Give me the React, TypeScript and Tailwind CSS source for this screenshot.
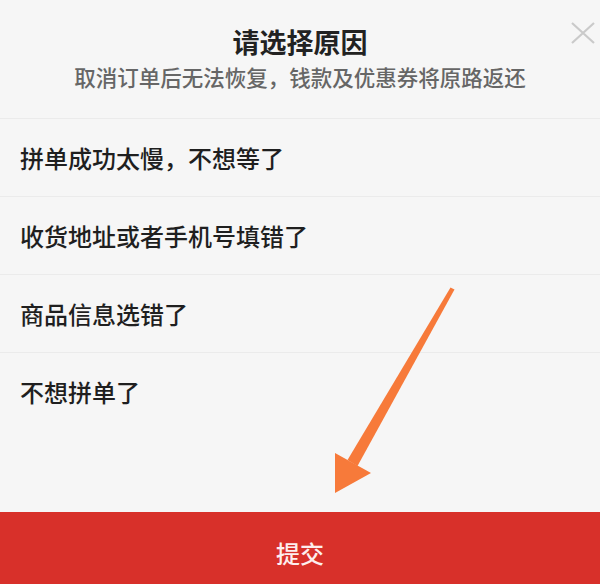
const reasons = [
  "拼单成功太慢，不想等了",
  "收货地址或者手机号填错了",
  "商品信息选错了",
  "不想拼单了",
];

function Arrow() {
  return (
    <svg className="pointer-events-none absolute left-0 top-0" width="600" height="584" viewBox="0 0 600 584">
      <polygon points="450.5,287.5 454.5,289.5 357.5,466 347.5,460" fill="#f77a3a" />
      <polygon points="335,493 335,453 371,473" fill="#f77a3a" />
    </svg>
  );
}

export default function App() {
  return (
    <div
      className="relative flex h-[584px] w-[600px] flex-col overflow-hidden bg-[#f6f6f6]"
      style={{ fontFamily: '"Noto Sans CJK SC", "Noto Sans", sans-serif' }}
    >
      <div className="relative flex h-[119px] flex-col items-center border-b border-[#ebebeb] pt-[24px]">
        <h2 className="text-[27px] font-bold leading-[36px] text-[#222]">请选择原因</h2>
        <p className="mt-[2px] text-[21.5px] font-medium leading-[30px] text-[#666]">取消订单后无法恢复，钱款及优惠券将原路返还</p>
        <svg className="absolute right-[5px] top-[22px]" width="24" height="22" viewBox="0 0 24 22">
          <path d="M1 1 L23 21 M23 1 L1 21" stroke="#cacaca" strokeWidth="2.2" fill="none" />
        </svg>
      </div>

      <ul className="flex flex-col">
        {reasons.map((r, i) => (
          <li
            key={r}
            className={`flex h-[78px] items-center px-[20px] text-[24px] font-medium text-[#1f1f1f] ${i < reasons.length - 1 ? "border-b border-[#ebebeb]" : ""}`}
          >
            {r}
          </li>
        ))}
      </ul>

      <div className="flex-1" />

      <button className="flex h-[72px] w-full items-start justify-center bg-[#d8302a] pt-[26px] text-[24px] font-medium leading-[30px] text-[#fdeeee]">
        提交
      </button>

      <Arrow />
    </div>
  );
}
